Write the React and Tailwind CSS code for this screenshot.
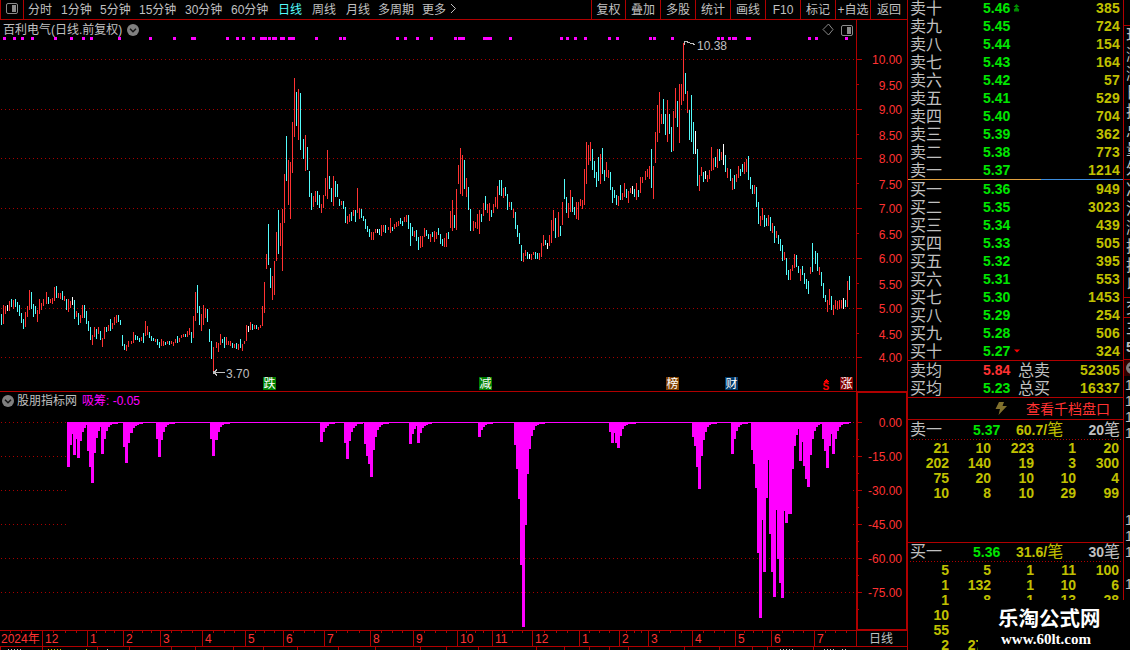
import React from "react";
import clsx from "clsx";

// Each token is colour + top-bottom in thirds of a pixel, bars are 2px apart.
// A dot moves the next bar one extra pixel to the right.
const candles = [
  {
    x: 1,
    y: 270,
    bars: "c132-165 r105-162 r108-132 w105-123 r93-123 c87-111 r90-117 c87-111 c96-126 c105-138 c129-159 c147-177 r126-171 r108-141 r60-120 c66-117 c102-141 c108-132 r120-156 r87-132 r99-120 r87-108 . r66-102 c81-102 r87-99 r84-102 r51-93 c48-84 r69-84 r69-87 c63-90 r78-93 c87-120 r87-126 r93-114 w81-105 c90-147 r123-141 c129-165 r135-159 r105-144 c105-144 c123-162 c153-183 c171-210 r195-225 r171-201 c177-207 r171-192 c183-210 r204-231 r171-207 c171-186 r165-183 c147-183 r159-177 r141-165 r135-159 c135-156 c150-165 c195-228 c222-240 r225-243 r213-231 . r213-222 r186-219 c195-210 c198-210 c204-216 r201-213 c189-219 r153-198 r168-195 c186-204 c198-213 c204-213 r207-216 c207-225 c216-234 r207-228 r213-228 c216-225 r213-222 c213-225 r213-222 r216-228 r207-219 c198-219 r204-216 r195-204 r192-201 c192-201 r183-201 r174-195 c186-219 r138-204 r66-153 c45-129 c108-165 r132-183 r105-165 r114-144 c117-156 c177-216 c213-267 r231-309 . r216-234 r219-246 r192-225 c207-219 c201-234 r201-225 r213-225 r213-228 c219-234 r222-234 c219-237 r222-240 c207-234 r222-243 r213-222 r165-213 w168-186 r156-180 c162-180 r165-177 c165-177 r171-180 r165-174 r108-168",
  },
  {
    x: 264,
    y: 70,
    bars: "r636-729 r552-597 c462-585 c594-654 r618-690 r573-675 r486-573 c420-552 r459-528 r417-603 r312-459 c198-333 r270-405 r276-447 r156-309 r24-201 c66-168 r57-210 c69-240 . c207-267 r195-303 c231-300 c303-381 c369-420 r378-411 r363-396 c363-405 c375-414 r402-429 r375-414 r324-378 r240-387 c318-357 c354-396 r318-408 c333-381 c342-381 c387-408 r393-405 c393-417 c411-459 r438-462 r432-456 c426-453 r420-438 c420-456 r354-429 r414-447 c417-444 c438-453 c447-477 c468-486 c477-501 r486-510 r486-510 r477-489 w477-489 c477-495 r465-498 r465-486 c465-489 . r471-480 r444-489 c471-483 r462-477 r456-471 r453-468 c444-462 c453-468 r441-456 r435-456 c435-477 c459-528 c471-498 r483-501 c480-513 c501-540 r498-534 r498-531 r474-501 c480-498 c492-507 r492-516 c486-501 r483-516 r486-507 c474-495 c492-522 c507-528 r504-531 r489-531 c486-507 r423-474 r390-483 c435-474 r357-480 r285-342 r234-372 r255-378 c270-357 r324-381 c351-420 c417-483 . r453-483 r456-474 r432-477 r420-492",
  },
  {
    x: 481,
    y: 110,
    bars: "c312-336 r279-318 c258-300 r282-309 r279-333 c300-321 r282-309 r261-291 r228-297 c210-255 c210-258 r234-264 c231-258 c252-300 r276-291 c276-300 r297-324 c306-357 c345-381 c369-402 c405-453 r429-456 r420-438 c426-447 w432-447 r432-450 r426-435 c426-447 c429-447 r429-450 r399-441 r375-408 c390-405 w399-417 r375-408 r330-399 r300-363 c324-384 . r306-381 c348-378 r276-345 c207-267 c261-309 r279-324 r240-306 c261-306 c291-315 r276-327 r276-330 r267-288 r270-297 r177-285 r96-222 r105-165 r96-153 c117-180 c153-204 c186-231 c141-213 r132-222 c114-192 c180-213 r156-201 r180-204 c186-240 c231-279 c240-264 c255-285 r258-288 c225-270 r249-270 r219-261 c237-264 r243-279 r234-249 w228-252 c237-261 r219-270 c240-261 r201-249 r201-219 . r183-210 r177-201 r168-207 c117-234 r168-267",
  },
  {
    x: 655,
    y: 30,
    bars: "r306-399 r225-336 r186-309 r252-282 c207-282 c252-315 r210-336 c252-312 c291-366 r243-363 r174-264 c213-291 r162-339 r162-225 r39-213 c129-192 r183-249 c240-330 c195-336 c276-372 w303-372 c357-468 r435-483 r411-438 c426-456 w423-447 r435-456 r420-447 r351-423 r384-420 c381-411 r357-414 c357-393 r366-390 w342-405 c375-426 r414-444 . c417-453 r444-480 c435-477 r432-456 r408-444 c417-438 c402-426 r396-432 r387-426 c378-450 c441-477 c465-492 r465-492 c471-531 c516-582 r558-588 r534-570 c555-591 c564-588 r555-588 c561-603 r579-609 c588-639 r603-624 c615-642 c627-663 c645-693 r666-690 c684-735 c720-750 r717-750 r705-723 r672-714 c675-711 c708-729 r717-753 c708-735 c729-762 c747-777 c753-792 r711-732 c639-726 . c663-702 c669-723 r711-735 c726-768 c759-804 c795-816 r810-846 r777-825 c798-840 r825-855 r810-837 r813-840 r810-837 r810-834 w804-837 c810-831 r753-831 c738-780",
  },
];

// runs of indicator bars: first x, then depths below zero in px
const indicator = [
  [68, [45, 23, 12, 33, 17, 36, 19, 10, 6, 3, 29, 45, 61, 31, 16, 9, 5]],
  [102, [32, 17, 9, 5, 3, 2, 2, 2]],
  [124, [25, 41, 21]],
  [131, [11, 6, 4, 3, 2, 2]],
  [157, [17, 35, 18, 10, 5, 3, 2, 2, 2]],
  [211, [17, 34]],
  [216, [18, 10, 5, 3, 2, 2, 2]],
  [321, [20, 10, 6, 4, 2, 2, 2]],
  [345, [21, 37, 19, 10, 6, 4, 2, 2, 2]],
  [365, [22, 34, 42, 55, 28, 15, 8, 5, 3, 2, 2, 2]],
  [410, [22, 12, 7, 4, 21, 11, 6, 4, 3, 2, 2]],
  [479, [15, 8, 5, 3, 2, 2, 2]],
  [515, [23, 47, 77, 143, 205, 103, 52, 27, 14, 8, 4, 3, 2, 2, 2]],
  [610, [10, 21, 11, 21, 26, 14, 7, 4, 3, 2, 2, 2, 2]],
  [693, [15, 24, 45, 67, 34, 18, 10, 5, 3, 2, 2, 2]],
  [732, [32, 17, 9, 5, 3, 2, 2, 2]],
  [752, [28, 42, 66, 131, 196, 98, 150, 76, 38, 112, 150, 175, 88, 137, 161, 176, 89, 101, 92, 92, 47, 24, 13, 7, 39, 20, 44, 57, 65, 33, 17]],
  [814, [9]],
  [816, [5, 3, 2]],
  [823, [17, 29, 46, 24, 12, 32, 17, 9, 5, 3, 2, 2, 2, 1]],
];

// x and width of the markers along the top of the price chart
const markers = [
  [3, 3], [13, 3], [21, 3], [31, 3], [54, 3], [70, 3], [82, 3], [90, 3], [118, 3], [149, 3], [173, 3],
  [191, 5], [226, 3], [236, 3], [242, 3], [252, 3], [260, 7], [268, 3], [272, 5], [280, 5], [288, 7],
  [315, 3], [339, 3], [343, 3], [396, 3], [404, 3], [416, 3], [430, 3], [454, 3], [458, 7], [483, 9],
  [509, 3], [560, 3], [566, 3], [574, 3], [584, 3], [608, 3], [616, 3], [649, 3], [653, 3], [671, 3],
  [717, 3], [721, 3], [728, 3], [732, 5], [746, 5], [808, 3], [815, 3], [845, 3],
];

const priceTicks = [
  ["10.00", 59], ["9.50", 85], ["9.00", 109], ["8.50", 135], ["8.00", 158], ["7.50", 184], ["7.00", 208],
  ["6.50", 234], ["6.00", 258], ["5.50", 284], ["5.00", 308], ["4.50", 334], ["4.00", 357],
];

const indicatorTicks = [
  ["0.00", 422], ["-15.00", 456], ["-30.00", 490], ["-45.00", 524], ["-60.00", 558], ["-75.00", 592],
];

const badges = [
  ["跌", 263, "#008000"], ["减", 479, "#008000"], ["榜", 666, "#804000"], ["财", 725, "#003868"], ["涨", 840, "#800000"],
];

const months = [
  ["2024年", 0, 42], ["12", 42, 87], ["1", 87, 123], ["2", 123, 160], ["3", 160, 202], ["4", 202, 245],
  ["5", 245, 283], ["6", 283, 324], ["7", 324, 370], ["8", 370, 413], ["9", 413, 457], ["10", 457, 492],
  ["11", 492, 532], ["12", 532, 579], ["1", 579, 619], ["2", 619, 648], ["3", 648, 692], ["4", 692, 735],
  ["5", 735, 771], ["6", 771, 814], ["7", 814, 856],
];

const lowerTicks = [0, 42, 97, 129, 171, 195, 233, 263, 297, 338, 375, 420, 446, 478, 536, 564, 589, 609, 628, 684, 719, 752, 767, 813];

const periods = [
  ["分时", "w-[33px]"], ["1分钟", "w-[39px]"], ["5分钟", "w-[39px]"], ["15分钟", "w-[46px]"], ["30分钟", "w-[46px]"],
  ["60分钟", "w-[47px]"], ["日线", "w-[34px]"], ["周线", "w-[34px]"], ["月线", "w-[32px]"], ["多周期", "w-[44px]"], ["更多", "w-[26px]"],
];

const tools = [
  ["复权", "w-[34px]"], ["叠加", "w-[35px]"], ["多股", "w-[35px]"], ["统计", "w-[35px]"], ["画线", "w-[35px]"],
  ["F10", "w-[35px]"], ["标记", "w-[35px]"], ["+自选", "w-[35px]"], ["返回", "w-[37px]"],
];

const asks = [
  ["卖十", "5.46", 385], ["卖九", "5.45", 724], ["卖八", "5.44", 154], ["卖七", "5.43", 164], ["卖六", "5.42", 57],
  ["卖五", "5.41", 529], ["卖四", "5.40", 704], ["卖三", "5.39", 362], ["卖二", "5.38", 773], ["卖一", "5.37", 1214],
];

const bids = [
  ["买一", "5.36", 949], ["买二", "5.35", 3023], ["买三", "5.34", 439], ["买四", "5.33", 505], ["买五", "5.32", 395],
  ["买六", "5.31", 553], ["买七", "5.30", 1453], ["买八", "5.29", 254], ["买九", "5.28", 506], ["买十", "5.27", 324],
];

const askOrders = [
  [21, 10, 223, 1, 20],
  [202, 140, 19, 3, 300],
  [75, 20, 10, 10, 4],
  [10, 8, 10, 29, 99],
];

const bidOrders = [
  [5, 5, 1, 11, 100],
  [1, 132, 1, 10, 6],
  [1, 8, 1, 13, 28],
  [10, "", "", "", ""],
  [55, "", "", "", ""],
  [2, 271, "", "", ""],
];

const barColors = { r: "#ff3232", c: "#54fcfc", w: "#ffffff" };

const Candles = () =>
  candles.map((group) => {
    let x = group.x - 2;
    return group.bars.split(" ").map((token, i) => {
      if (token === ".") {
        x += 1;
        return null;
      }
      x += 2;
      const [top, bottom] = token.slice(1).split("-").map(Number);
      return (
        <rect
          key={`${group.x}-${i}`}
          x={x}
          y={group.y + top / 3}
          width="1"
          height={(bottom - top) / 3}
          fill={barColors[token[0]]}
        />
      );
    });
  });

const GridLine = ({ y, to = 854 }) => (
  <line x1="1" x2={to} y1={y + 0.5} y2={y + 0.5} stroke="#a80000" strokeDasharray="1 3" />
);

const SidebarIcon = () => (
  <svg width="12" height="11" viewBox="0 0 12 11" className="shrink-0">
    <rect x="0.5" y="0.5" width="11" height="10" rx="1.5" fill="none" stroke="#8a8a8a" />
    <rect x="6" y="2" width="4" height="7" fill="#8a8a8a" />
  </svg>
);

const DropIcon = () => (
  <svg width="12" height="12" viewBox="0 0 12 12" className="shrink-0">
    <circle cx="6" cy="6" r="6" fill="#808080" />
    <path d="M3 4.8 L6 7.8 L9 4.8" fill="none" stroke="#151515" strokeWidth="1.5" />
  </svg>
);

const Toolbar = () => (
  <div className="flex h-5 shrink-0 border-b border-[#b00000] leading-5">
    <div className="flex w-6 shrink-0 justify-center border-x border-[#b00000] pt-[3px]">
      <SidebarIcon />
    </div>
    <div className="flex pl-1">
      {periods.map(([name, width]) => (
        <span key={name} className={clsx("shrink-0 whitespace-nowrap", width, name === "日线" && "text-[#54fcfc]")}>
          {name}
        </span>
      ))}
      <svg width="10" height="18" viewBox="0 0 10 18">
        <path d="M3 4 L7.5 8.5 L3 13" fill="none" stroke="#c0c0c0" />
      </svg>
    </div>
    <div className="ml-auto flex">
      {tools.map(([name, width]) => (
        <span key={name} className={clsx("h-[19px] shrink-0 whitespace-nowrap border-l border-[#b00000] text-center", width)}>
          {name}
        </span>
      ))}
    </div>
  </div>
);

const PriceChart = () => (
  <div className="relative h-[371px] shrink-0">
    <svg width="907" height="371" viewBox="0 20 907 371" shapeRendering="crispEdges" className="block">
      {[59, 109, 158, 208, 258, 308, 357].map((y) => (
        <GridLine key={y} y={y} />
      ))}
      {markers.map(([x, w]) => (
        <rect key={x} x={x} y="37" width={w} height="3" fill="#ff00ff" />
      ))}
      <Candles />
      <rect x="856" y="20" width="1" height="371" fill="#b00000" />
      {priceTicks.map(([label, y], i) => (
        <g key={label}>
          <rect x="857" y={i % 2 ? y - 1 : y} width={i % 2 ? 2 : 5} height="1" fill="#b00000" />
          <text x="902" y={y + 5} textAnchor="end" fill="#ff3232">
            {label}
          </text>
        </g>
      ))}
      <g stroke="#c0c0c0" fill="none">
        <path d="M684 45 V41 L695 44.5 M684 41 H688" />
        <path d="M214 372.5 H225 M217 369.5 L214 372.5 L217 375.5" />
      </g>
      <rect x="213" y="371" width="2" height="3" fill="#c0c0c0" />
      <g fill="#c0c0c0">
        <text x="697" y="50">10.38</text>
        <text x="226" y="378">3.70</text>
      </g>
      {badges.map(([label, x, color]) => (
        <g key={label}>
          <rect x={x} y="377" width="13" height="13" fill={color} />
          <text x={x + 0.5} y="388" fontSize="12" fill="#ffffff">
            {label}
          </text>
        </g>
      ))}
      <path d="M823 382 L826 379 L829 382 Z" fill="#ff0000" />
      <text x="822.5" y="390" fontSize="10" fontWeight="bold" fill="#ff0000">
        S
      </text>
      <path d="M828.5 24 L833 29.5 L828.5 35 L823 29.5 Z" fill="none" stroke="#8a8a8a" shapeRendering="auto" />
    </svg>
    <div className="absolute left-[3px] top-0 flex w-[850px] items-center gap-[5px] leading-5">
      <span>百利电气(日线.前复权)</span>
      <DropIcon />
      <span className="ml-auto">
        <SidebarIcon />
      </span>
    </div>
  </div>
);

const IndicatorChart = () => (
  <div className="relative h-60 shrink-0">
    <svg width="908" height="240" viewBox="0 391 908 240" shapeRendering="crispEdges" className="block">
      <rect x="0" y="391" width="908" height="1" fill="#b00000" />
      <rect x="0" y="630" width="908" height="1" fill="#b00000" />
      <GridLine y={422} />
      {[456, 490, 524].map((y) => (
        <g key={y}>
          <GridLine y={y} to={67} />
          <rect x="853" y={y} width="1" height="1" fill="#a80000" />
        </g>
      ))}
      <GridLine y={558} />
      <GridLine y={592} />
      <rect x="67" y="422" width="784" height="1" fill="#ff00ff" />
      {indicator.map(([start, depths]) =>
        depths.map((depth, i) => (
          <rect key={`${start}-${i}`} x={start - 1 + i * 2} y="422" width="3" height={depth} fill="#ff00ff" />
        ))
      )}
      <rect x="857" y="392" width="50" height="238" fill="none" stroke="#b00000" strokeWidth="2" />
      {indicatorTicks.map(([label, y]) => (
        <g key={label}>
          <rect x="858" y={y} width="4" height="1" fill="#b00000" />
          <rect x="858" y={y + 17} width="1" height="1" fill="#b00000" />
          <text x="902" y={y + 5} textAnchor="end" fill="#ff3232">
            {label}
          </text>
        </g>
      ))}
    </svg>
    <div className="absolute left-0.5 top-0 flex items-center leading-5">
      <DropIcon />
      <span className="ml-[3px]">股朋指标网</span>
      <span className="ml-[5px] text-[#ff00ff]">吸筹: -0.05</span>
    </div>
  </div>
);

const TimeAxis = () => (
  <div className="shrink-0">
    <div className="flex h-4 border-b border-[#b00000] leading-4 text-[#ff3232]">
      {months.map(([label, from, to]) => (
        <div key={from} className="flex h-[15px] shrink-0 flex-col border-r border-[#b00000]" style={{ width: from ? to - from : 43 }}>
          <div className="flex h-0 justify-evenly">
            <i className="h-[2px] w-px bg-[#b00000]" />
            <i className="h-[2px] w-px bg-[#b00000]" />
            <i className="h-[2px] w-px bg-[#b00000]" />
          </div>
          <span className={clsx("whitespace-nowrap", from ? "pl-[2px]" : "pl-[1px]")}>{label}</span>
        </div>
      ))}
      <span className="h-[15px] w-[50px] pl-3 text-[#c0c0c0]">日线</span>
    </div>
    <svg width="907" height="3" viewBox="0 647 907 3" shapeRendering="crispEdges" className="block">
      {lowerTicks.map((x) => (
        <rect key={x} x={x} y="647" width="1" height="3" fill="#b00000" />
      ))}
      <path d="M8 649.5 H22 M107 649.5 H108 M780 649.5 H794 M824 649.5 H834 M842 649.5 H848" stroke="#c0c0c0" strokeDasharray="1 2" />
      <path d="M48 649.5 H61 M86 649.5 H87" stroke="#c0c000" strokeDasharray="1 2" />
    </svg>
  </div>
);

const BookRow = ({ name, price, volume }) => (
  <div className="flex h-[18px] items-center">
    <span className="w-[73px] translate-y-px text-base leading-[18px]">{name}</span>
    <span className="text-sm font-bold leading-[18px] text-[#00e600]">{price}</span>
    {name === "卖十" && (
      <svg width="7" height="8" viewBox="0 0 7 8" className="ml-[3px]">
        <path d="M3.5 0 L6.5 3 H0.5 Z M3.5 2.5 L6.5 6 H0.5 Z M1 6 H6 V7.5 H1 Z" fill="#008c00" />
      </svg>
    )}
    {name === "买十" && (
      <svg width="6" height="4" viewBox="0 0 6 4" className="ml-1">
        <path d="M0 0.5 H6 L3 3.5 Z" fill="#ff0000" />
      </svg>
    )}
    <span className="ml-auto text-sm font-bold leading-[18px] tracking-[0.2px] text-[#c0c000]">{volume}</span>
  </div>
);

const AverageRow = ({ name, price, total, volume, priceClass }) => (
  <div className="flex h-[18px] items-center">
    <span className="w-[73px] translate-y-px text-base leading-[18px]">{name}</span>
    <span className={clsx("w-[35px] text-sm font-bold leading-[18px]", priceClass)}>{price}</span>
    <span className="translate-y-px text-base leading-[18px]">{total}</span>
    <span className="ml-auto text-sm font-bold leading-[18px] tracking-[0.2px] text-[#c0c000]">{volume}</span>
  </div>
);

const OrderBlock = ({ name, price, average, count, orders, headClass }) => (
  <>
    <div className={clsx("flex shrink-0 items-center pl-[2px] pr-[3px] text-sm font-bold leading-[18px]", headClass)}>
      <span className="w-[63px] text-base font-normal leading-[18px]">{name}</span>
      <span className="w-[43px] text-[#00e600]">{price}</span>
      <span className="whitespace-nowrap text-[#c0c000]">
        {average}/<span className="text-base font-normal leading-[18px]">笔</span>
      </span>
      <span className="ml-auto whitespace-nowrap">
        {count}
        <span className="text-base font-normal leading-[18px]">笔</span>
      </span>
    </div>
    <svg width="215" height="1" className="block shrink-0">
      <line x1="2" x2="213" y1="0.5" y2="0.5" stroke="#b00000" strokeDasharray="1 2" />
    </svg>
    <div className="grid grid-cols-[41px_42px_43px_42px_43px] pt-px text-right text-sm font-bold leading-[15px] text-[#c0c000]">
      {orders.flat().map((volume, i) => (
        <span key={i} className="h-[15px]">
          {volume}
        </span>
      ))}
    </div>
  </>
);

const OrderBook = () => (
  <div className="flex w-[215px] shrink-0 flex-col">
    <div className="-mt-px flex h-[180px] shrink-0 flex-col pl-[2px] pr-[3px]">
      {asks.map(([name, price, volume]) => (
        <BookRow key={name} name={name} price={price} volume={volume} />
      ))}
    </div>
    <div className="flex h-px shrink-0">
      <div className="w-[133px] bg-[#e0a040]" />
      <div className="flex-1 bg-[#3c8cdc]" />
    </div>
    <div className="shrink-0 border-b border-[#b00000] pl-[2px] pr-[3px]">
      {bids.map(([name, price, volume]) => (
        <BookRow key={name} name={name} price={price} volume={volume} />
      ))}
    </div>
    <div className="h-[37px] shrink-0 border-b border-[#b00000] pl-[2px] pr-[3px]">
      <AverageRow name="卖均" price="5.84" total="总卖" volume="52305" priceClass="text-[#ff3232]" />
      <AverageRow name="买均" price="5.23" total="总买" volume="16337" priceClass="text-[#00e600]" />
    </div>
    <div className="flex h-[22px] shrink-0 items-center border-b border-[#b00000] pl-[87px]">
      <svg width="12" height="13" viewBox="0 0 12 13">
        <path d="M4 0 H9 L7.5 4 H12 L3.5 13 L5 7 H0.5 Z" fill="#80702c" />
      </svg>
      <span className="ml-[19px] text-sm leading-5 text-[#ff3232]">查看千档盘口</span>
    </div>
    <div className="flex h-[123px] shrink-0 flex-col border-b border-[#b00000]">
      <OrderBlock name="卖一" price="5.37" average="60.7" count="20" orders={askOrders} headClass="h-[19px]" />
    </div>
    <div className="flex h-[107px] shrink-0 flex-col overflow-hidden">
      <OrderBlock name="买一" price="5.36" average="31.6" count="30" orders={bidOrders} headClass="h-[18px]" />
    </div>
  </div>
);

// the quote panel on the far right, only its first pixels are on screen
const QuoteEdge = () => (
  <div className="flex w-[7px] shrink-0 flex-col overflow-hidden border-l border-[#b00000] text-base leading-[19px]">
    <div className="h-[26px] shrink-0 border-b border-[#b00000]" />
    <div className="flex h-[154px] shrink-0 flex-col border-b border-[#b00000] pl-[2px]">
      {"现涨涨日换总量外".split("").map((char, i) => (
        <span key={i} className="h-[19px] w-4 shrink-0">{char}</span>
      ))}
    </div>
    <div className="flex h-[118px] shrink-0 flex-col border-b border-[#b00000] pl-[2px]">
      {"净流涨换换以".split("").map((char, i) => (
        <span key={i} className="h-[19px] w-4 shrink-0">{char}</span>
      ))}
    </div>
    <div className="h-5 w-5 shrink-0 border-b border-[#b00000] pl-[2px]">交</div>
    <div className="h-[42px] w-5 shrink-0 border-b border-[#b00000] pl-[2px]">
      主
      <div className="text-sm font-bold">5</div>
    </div>
    <div className="flex h-[16px] w-5 shrink-0 items-center bg-[#300000] pl-[2px]">
      <DropIcon />
    </div>
    <div className="flex h-[136px] w-5 shrink-0 flex-col pl-px pt-px text-sm leading-4">
      <span>1</span>
      <span>1</span>
      <span>1</span>
      <span>1</span>
    </div>
    <div className="w-5 shrink-0 pl-px text-sm leading-4">
      <div>1</div>
      <div>1</div>
      <div>1</div>
      <div className="mt-4">1</div>
    </div>
  </div>
);

const Watermark = () => (
  <div className="absolute bottom-0 right-0 flex h-[50px] w-[152px] flex-col bg-black pl-5 text-white">
    <span className="mt-[7px] text-[20.5px] font-bold leading-6">乐淘公式网</span>
    <span className="pl-[3px] font-['Liberation_Serif',serif] text-[15px] font-bold leading-4">www.60lt.com</span>
  </div>
);

const App = () => {
  return (
    <div className="relative flex h-[650px] w-[1130px] overflow-hidden bg-black font-['Liberation_Sans','Noto_Sans_CJK_SC',sans-serif] text-xs text-[#c0c0c0]">
      <div className="flex w-[908px] shrink-0 flex-col border-r border-[#b00000]">
        <Toolbar />
        <PriceChart />
        <IndicatorChart />
        <TimeAxis />
      </div>
      <OrderBook />
      <QuoteEdge />
      <Watermark />
    </div>
  );
};

export default App;
